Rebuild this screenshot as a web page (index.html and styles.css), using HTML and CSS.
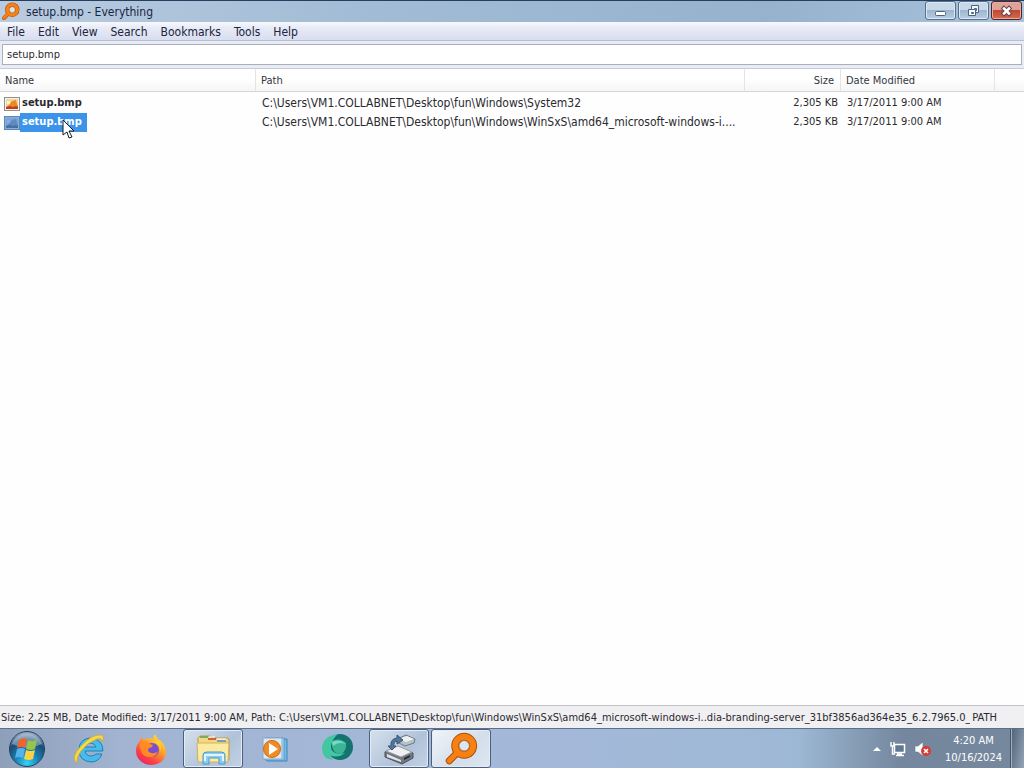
FILE: index.html
```html
<!DOCTYPE html>
<html lang="en">
<head>
<meta charset="utf-8">
<title>setup.bmp - Everything</title>
<link rel="stylesheet" href="styles.css">
</head>
<body>
<svg width="0" height="0" class="defs" aria-hidden="true">
  <defs>
    <symbol id="lens" viewBox="0 0 32 32">
      <path d="M13 19 L5 27" stroke="#a84c10" stroke-width="6.6" stroke-linecap="round"/>
      <circle cx="19" cy="13" r="8.500" fill="none" stroke="#a84c10" stroke-width="7.4"/>
      <path d="M13 19 L5 27" stroke="#f88010" stroke-width="4.8" stroke-linecap="round"/>
      <circle cx="19" cy="13" r="8.500" fill="none" stroke="#f88010" stroke-width="5.6"/>
      <circle cx="19" cy="13" r="5" fill="#dbe6f0" stroke="#b86a30"/>
    </symbol>
    <symbol id="bitmap" viewBox="0 0 16 14">
      <rect x=".5" y=".5" width="15" height="13" fill="#f8f4e8" stroke="#8c9096"/>
      <rect x="2" y="2" width="12" height="10" fill="#f5d594"/>
      <path d="M2 10l3-2 3-4 4-1 1 4 1 2v3H2z" fill="#e88a28"/>
      <path d="M2 10l4-1 3 1 3-1 2 1v2H2z" fill="#c23c22"/>
      <path d="M3 4h3v3H3z" fill="#fdf3cc"/>
    </symbol>
  </defs>
</svg>
<div class="desktop">
  <main class="window">
    <header class="titlebar">
      <svg class="app-icon"><use href="#lens"/></svg>
      <h1 class="title">setup.bmp - Everything</h1>
      <div class="controls">
        <button class="control" aria-label="Minimize"><svg width="30" height="16" viewBox="0 0 30 16"><rect x="9.500" y="8.500" width="10" height="4" rx="1" fill="#fff" stroke="#4d6384"/></svg></button>
        <button class="control" aria-label="Restore"><svg width="30" height="16" viewBox="0 0 30 16"><path d="M12.500 2.500h7v7h-7z" fill="#f3f7fc" stroke="#4d6384"/><path d="M15.500 5.500h2v2h-2z" fill="#9fb6d2" stroke="#4d6384"/><path d="M9.500 6.500h7v6h-7z" fill="#fff" stroke="#4d6384"/><path d="M12.500 9.500h2v1h-2z" fill="#9fb6d2" stroke="#4d6384"/></svg></button>
        <button class="control close" aria-label="Close"><svg width="30" height="16" viewBox="0 0 30 16"><path d="M12 5.500l5 5M17 5.500l-5 5" stroke="#683c46" stroke-width="4.500" stroke-linecap="square"/><path d="M12 5.500l5 5M17 5.500l-5 5" stroke="#fff" stroke-width="2.600" stroke-linecap="square"/></svg></button>
      </div>
    </header>
    <nav class="menu" aria-label="Menu">
      <button>File</button><button>Edit</button><button>View</button><button>Search</button><button>Bookmarks</button><button>Tools</button><button>Help</button>
    </nav>
    <div class="search"><input type="text" aria-label="Search" value="setup.bmp"></div>
    <div class="results">
      <table>
        <colgroup><col class="col-name"><col class="col-path"><col class="col-size"><col class="col-date"><col></colgroup>
        <thead><tr><th>Name</th><th>Path</th><th class="size">Size</th><th>Date Modified</th><th></th></tr></thead>
        <tbody>
          <tr><td><div class="file"><svg class="file-icon"><use href="#bitmap"/></svg><span class="file-name">setup.bmp</span></div></td><td class="path">C:\Users\VM1.COLLABNET\Desktop\fun\Windows\System32</td><td class="size">2,305 KB</td><td>3/17/2011 9:00 AM</td><td></td></tr>
          <tr class="selected"><td><div class="file"><span class="tinted"><svg class="file-icon"><use href="#bitmap"/></svg></span><span class="file-name">setup.bmp</span></div></td><td class="path">C:\Users\VM1.COLLABNET\Desktop\fun\Windows\WinSxS\amd64_microsoft-windows-i....</td><td class="size">2,305 KB</td><td>3/17/2011 9:00 AM</td><td></td></tr>
        </tbody>
      </table>
    </div>
    <footer class="status">
      <span class="status-text">Size: 2.25 MB, Date Modified: 3/17/2011 9:00 AM, Path: C:\Users\VM1.COLLABNET\Desktop\fun\Windows\WinSxS\amd64_microsoft-windows-i..dia-branding-server_31bf3856ad364e35_6.2.7965.0_ni</span>
      <span class="status-mode">PATH</span>
    </footer>
  </main>
  <div class="taskbar">
    <button class="start" aria-label="Start">
      <svg width="38" height="38" viewBox="0 0 38 38">
        <defs><radialGradient id="orb" cx=".5" cy=".9" r=".85"><stop offset="0" stop-color="#35d3f4"/><stop offset=".4" stop-color="#1780b4"/><stop offset=".75" stop-color="#1c4a74"/><stop offset="1" stop-color="#91a9bf"/></radialGradient></defs>
        <circle cx="19" cy="19" r="17.500" fill="url(#orb)" stroke="#28415f"/>
        <path d="M4 14a16 16 0 0130 0q-15 7-30 0z" fill="#dce9f2" opacity=".4"/>
        <path d="M11 10q4-3 8-1l-2 9q-4-2-8 0z" fill="#f0642c"/><path d="M20 10q4 2 9 0l-2 9q-4 2-9 0z" fill="#93c64b"/>
        <path d="M9 19q4-2 8 0l-2 9q-4-2-8 0z" fill="#56b2ec"/><path d="M18 20q4 2 9 0l-2 9q-4 2-9 0z" fill="#fcd144"/>
      </svg>
    </button>
    <div class="tasks">
      <button class="task" aria-label="Internet Explorer"><svg width="34" height="34" viewBox="0 0 34 34">
        <path d="M31 19H13q1 5 6 5 3 0 5-2h6q-3 8-11 8Q7 29 7 18T18 6q13 1 13 13zM13 15h11q-1-4-6-4-4 0-5 4z" fill="#49bbe9" stroke="#1a83bd" fill-rule="evenodd"/>
        <path d="M5 31Q-2 26 9 14 20 2 29 3q4 1 1 7 0-5-5-3Q16 10 9 19 4 26 5 31z" fill="#f5d94c" stroke="#d9a922" stroke-width=".8"/></svg></button>
      <button class="task" aria-label="Firefox"><svg width="34" height="34" viewBox="0 0 34 34">
        <defs><linearGradient id="fox" x1=".9" y1="0" x2=".2" y2="1"><stop offset="0" stop-color="#fff04a"/><stop offset=".4" stop-color="#ffa326"/><stop offset=".75" stop-color="#fb4145"/><stop offset="1" stop-color="#e72368"/></linearGradient></defs>
        <path d="M21 2q2 5 6 7 5 5 5 11c0 8-7 13-15 13S2 27 2 19q0-6 4-10l1-4 3 3q4-3 9-1 0-3 2-5z" fill="url(#fox)"/>
        <circle cx="18" cy="18" r="7" fill="#7650cf"/><path d="M6 11q6-4 10 1l3 1q-1 3-4 3-2 2 0 4 5 3 9-1-2 6-8 6-7 0-9-6-2-5-1-8z" fill="#ff8a26"/><path d="M18 10q9 1 8 10 3-8-2-12z" fill="#ffcc3a"/></svg></button>
      <button class="task running" aria-label="Windows Explorer"><svg width="36" height="34" viewBox="0 0 36 34">
        <path d="M3 6l2-2h10l2 2h15q2 0 2 2v20H3z" fill="#f2d980" stroke="#b79a47"/><path d="M5 4h8v2H5z" fill="#7faa66"/><path d="M13 6h8v2h-8z" fill="#d06040"/><path d="M14 5h6M22 7h9" stroke="#fff"/><path d="M22 8h9v2h-9z" fill="#7c9cc0"/>
        <path d="M2 11h32l-1 19H3z" fill="#faeaa2" stroke="#d2b35a"/><path d="M8 32V23q0-3 4-3h14q4 0 4 3v9h-6v-6H14v6z" fill="#8cccf0" stroke="#4c9bca"/><path d="M10 29v-6h18v6" fill="none" stroke="#dff5ff" stroke-width="2"/></svg></button>
      <button class="task" aria-label="Media Player"><svg width="34" height="34" viewBox="0 0 34 34">
        <path d="M9 7h20v22H9z" fill="#70b8e6" stroke="#3c87bd"/><path d="M7 6h19v22H7z" fill="#b1ddf5" stroke="#579acb"/><path d="M5 6h19v21H5z" fill="#dce8f2" stroke="#89a9c5"/><circle cx="14" cy="17" r="8.500" fill="#f38b25" stroke="#cb681b"/><path d="M11 11l9 6-9 6z" fill="#fff"/></svg></button>
      <button class="task" aria-label="Teal sphere"><svg width="34" height="34" viewBox="0 0 34 34">
        <circle cx="20" cy="15" r="13" fill="#12736f"/><path d="M18 2Q2 4 2 17q0 10 11 11l-4-5q9 4 16-2Q10 24 11 13q2-7 7-11z" fill="#43c7a0"/><path d="M12 9q8-4 14 2 1 9-6 11-9-1-8-13z" fill="#3cb596"/><path d="M12 10q7-4 14 2-8-3-13 2z" fill="#77dbc0"/></svg></button>
      <button class="task running" aria-label="Disk utility"><svg width="36" height="34" viewBox="0 0 36 34">
        <path d="M16 7l9-4 9 4-1 4-9 3-8-4z" fill="#b9c1c6" stroke="#6d7880"/><path d="M17 7l9-3 7 3-8 3z" fill="#edf0f2"/><path d="M4 20l12-5 16 6v5l-11 6-17-7z" fill="#70787e" stroke="#4a5157"/><path d="M5 19l12-5 14 6-11 5z" fill="#eef0f1" stroke="#969fa5"/><path d="M6 22l14 6v2L6 25z" fill="#e2e6e8"/><path d="M23 26l6-3v2l-6 3z" fill="#242b31"/><path d="M11 18l-4-4h3Q9 7 16 6V3l6 5-6 4V9q-4 1-3 5h2z" fill="#547698" stroke="#345876"/></svg></button>
      <button class="task running active" aria-label="Everything"><svg width="34" height="34"><use href="#lens"/></svg></button>
    </div>
    <div class="tray">
      <button class="tray-button" aria-label="Show hidden icons"><svg width="10" height="6" viewBox="0 0 10 6"><path d="M1 5l4-4 4 4z" fill="#fff"/></svg></button>
      <button class="tray-button" aria-label="Network"><svg width="16" height="16" viewBox="0 0 16 16"><path d="M4.500 3.500h10v8h-10z" fill="#607993" stroke="#fff" stroke-width="1.500"/><path d="M7 13h5M6 14.500h8M1 1v4h3V1M2.500 5v8H5" fill="none" stroke="#fff" stroke-width="1.400"/></svg></button>
      <button class="tray-button" aria-label="Volume muted"><svg width="18" height="16" viewBox="0 0 18 16"><path d="M1 5h3l5-4v14l-5-4H1z" fill="#fff" stroke="#65788e" stroke-width=".6"/><circle cx="12" cy="10" r="5" fill="#d93a30"/><path d="M10 8l4 4m0-4l-4 4" stroke="#fff" stroke-width="1.600"/></svg></button>
      <button class="clock"><span>4:20 AM</span><span>10/16/2024</span></button>
    </div>
    <button class="show-desktop" aria-label="Show desktop"></button>
  </div>
  <svg class="cursor" width="13" height="20" viewBox="0 0 13 20"><path d="M1 1v15l4-3 2 6 3-1-3-6h5z" fill="#fff" stroke="#171b23"/></svg>
</div>
</body>
</html>
```
FILE: styles.css
```css
* { box-sizing: border-box; }
html, body { height: 100%; }
body { margin: 0; font-family: "DejaVu Sans Condensed", "Open Sans", sans-serif; font-size: 11px; line-height: 16px; color: #2a2a30; }
button { font: inherit; color: inherit; padding: 0; border: 0; background: none; }
svg { display: block; fill: none; }
.defs { position: absolute; }
.desktop { min-height: 100%; display: flex; flex-direction: column; position: relative; overflow: hidden; }
.window { flex: 1; display: flex; flex-direction: column; background: #fefefe; min-width: 0; }

.titlebar { display: flex; height: 22px; align-items: center; gap: 6px; padding-left: 1px; border-top: 1px solid #263e60; background: linear-gradient(90deg, #b9cbe0, #a2bcd5 35%, #96b2cd 75%, #a8c2db); }
.app-icon { width: 19px; height: 19px; }
.title { margin: 0; flex: 1; font-size: 12px; font-weight: 400; color: #17263f; }
.controls { display: flex; gap: 2px; align-self: flex-start; padding-right: 2px; }
.control { width: 31px; height: 19px; display: grid; place-items: center; border: 1px solid #58708f; border-radius: 3px; background: linear-gradient(#c8d8e9 48%, #9db6d0 50%, #b8cde0); box-shadow: inset 0 0 0 1px #dce8f4; }
.close { border-color: #53232a; background: linear-gradient(#dda298 45%, #bd4934 50%, #d76b4f); box-shadow: inset 0 0 0 1px #e8aca1; }

.menu { display: flex; height: 19px; padding: 2px 7px 0; gap: 13px; border-bottom: 1px solid #b7bfd2; background: linear-gradient(#f8f9fd, #e7eaf6 35%, #d8def0); color: #20243c; font-size: 12px; line-height: 15px; }
.search { padding: 3px 2px 3px; background: #e9ebf5; border-bottom: 1px solid #c8cad4; }
.search input { display: block; width: 100%; height: 21px; padding: 0 4px; font: inherit; color: inherit; border: 1px solid #a8b0bf; background: #fff; outline: 0; }

.results { flex: 1; }
table { width: 100%; table-layout: fixed; border-collapse: separate; border-spacing: 0; }
.col-name { width: 256px; }
.col-path { width: 489px; }
.col-size { width: 96px; }
.col-date { width: 154px; }
th, td { padding: 0 5px; text-align: left; font-weight: 400; white-space: nowrap; }
th { height: 23px; padding-top: 2px; color: #34363e; border-right: 1px solid #e2e4e8; border-bottom: 1px solid #d5d5d8; background: linear-gradient(#fff 45%, #f5f5f6); }
th:last-child { border-right: 0; }
td { height: 19px; padding: 0 0 1px 6px; }
.path { font-size: 12px; }
tbody::before { content: ""; display: table-row; height: 2px; }
td:nth-child(1) { padding: 0 0 0 4px; }
.size { text-align: right; }
td.size { padding-right: 3px; }
th.size { padding-right: 6px; }
.file { display: flex; align-items: center; }
.file-icon { width: 16px; height: 14px; }
.file-name { padding: 1px 5px 2px 2px; font-weight: 700; }
.selected .file-name { background: #3b94ea; color: #fff; }
.tinted { background: #3b82d4; }
.tinted .file-icon { opacity: .4; filter: grayscale(1); }

.status { display: flex; height: 23px; align-items: center; gap: 2px; padding: 2px 27px 0 1px; border-top: 1px solid #c2c2c6; background: #f0eff1; }
.status-text { flex: 1; min-width: 0; white-space: nowrap; overflow: hidden; }

.taskbar { display: flex; height: 40px; background: linear-gradient(90deg, #8e9fb9, #a2b4d2 12%, #a4b9da 55%, #9db8d4 78%, #74879e 88%, #76889d); border-top: 1px solid #5d7088; }
.start { width: 54px; display: grid; place-items: center; }
.tasks { flex: 1; display: flex; gap: 2px; padding-left: 5px; }
.task { width: 60px; display: grid; place-items: center; }
.running { border: 1px solid #4b607e; border-radius: 3px; background: linear-gradient(135deg, #d6e0ec, #b0c2da 60%, #c3d2e4); box-shadow: inset 0 0 0 1px #e2ebf6; }
.active { background: linear-gradient(135deg, #f2f5f8, #d2deeb 60%, #dfe7f0); }
.tray { display: flex; align-items: center; gap: 8px; padding-right: 8px; color: #fff; }
.clock { display: flex; flex-direction: column; align-items: center; padding-left: 5px; line-height: 17px; }
.show-desktop { width: 14px; border-left: 1px solid #40536a; background: linear-gradient(100deg, #4e6176, #93a5b7); box-shadow: inset 1px 0 #a3b2c3; }
.cursor { position: absolute; left: 62px; top: 119px; }
```
